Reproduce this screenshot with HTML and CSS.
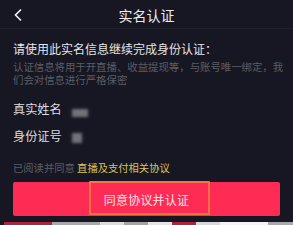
FILE: index.html
```html
<!DOCTYPE html>
<html lang="zh-CN">
<head>
    <meta charset="UTF-8">
    <title>实名认证</title>
    <link rel="stylesheet" href="styles.css">
</head>
<body>
    <div class="header">
        <span class="back">
            <svg width="10" height="14" viewBox="0 0 10 14"><path d="M8 1.5 L2.5 7 L8 12.5" fill="none" stroke="#f2f2f4" stroke-width="1.6"/></svg>
        </span>
        <div class="title">实名认证</div>
    </div>

    <div class="content">
        <div class="headline">请使用此实名信息继续完成身份认证：</div>
        <div class="desc">认证信息将用于开直播、收益提现等，与账号唯一绑定，我们会对信息进行严格保密</div>

        <div class="info">
            <div class="row">
                <span class="label">真实姓名</span>
                <span class="blur name"></span>
            </div>
            <div class="row">
                <span class="label">身份证号</span>
                <span class="blur idno"></span>
            </div>
        </div>

        <div class="agree">已阅读并同意 <a href="#">直播及支付相关协议</a></div>

        <div class="btn-wrap">
            <button class="confirm">同意协议并认证</button>
            <span class="highlight"></span>
        </div>
    </div>

    <div class="strip">
        <span style="width:4px;background:#161722"></span>
        <span style="width:48px;background:#b3213f"></span>
        <span style="width:48px;background:#a9a9ad"></span>
        <span style="width:24px;background:#dcdcdf"></span>
        <span style="width:24px;background:#a4a4a8"></span>
        <span style="width:24px;background:#e4e4e6"></span>
        <span style="width:24px;background:#b3213f"></span>
        <span style="width:24px;background:#d8d8db"></span>
        <span style="width:48px;background:#f4f4f5"></span>
        <span style="width:25px;background:#a9a9ad"></span>
    </div>
</body>
</html>
```

FILE: styles.css
```css
body {
    margin: 0;
    width: 293px;
    height: 225px;
    overflow: hidden;
    background: #161722;
    font-family: "Noto Sans CJK SC", "Noto Sans", sans-serif;
    display: flex;
    flex-direction: column;
}

.header {
    position: relative;
    height: 29px;
    display: flex;
    align-items: center;
    justify-content: center;
    border-bottom: 1px solid rgba(255, 255, 255, 0.05);
    box-sizing: border-box;
}

.header .back {
    position: absolute;
    left: 13px;
    top: 8px;
    display: flex;
}

.header .title {
    color: #ececee;
    font-size: 14px;
    line-height: 20px;
    margin-top: 1px;
}

.content {
    padding: 0 13px;
    display: flex;
    flex-direction: column;
}

.headline {
    margin-top: 12px;
    color: #e6e6e8;
    font-size: 12px;
    line-height: 16px;
}

.desc {
    margin-top: 3px;
    margin-right: -6px;
    color: #5c5d66;
    font-size: 10.4px;
    line-height: 13px;
}

.info {
    margin-top: 9px;
}

.row {
    height: 27px;
    display: flex;
    align-items: center;
}

.label {
    color: #dedee0;
    font-size: 12.2px;
    width: 59px;
}

.blur {
    display: block;
    background: #8a8a90;
    filter: blur(1.5px);
    opacity: 0.8;
}

.blur.name {
    width: 16px;
    height: 8px;
    margin-top: 9px;
}

.blur.idno {
    width: 10px;
    height: 10px;
    margin-top: 4px;
}

.agree {
    margin-top: 12px;
    color: #5c5d66;
    font-size: 10.3px;
    line-height: 14px;
}

.agree a {
    color: #d9c35c;
    text-decoration: none;
}

.btn-wrap {
    position: relative;
    margin-top: 7px;
}

.confirm {
    width: 100%;
    height: 34px;
    border: none;
    border-radius: 2px;
    background: #fe2c55;
    color: #f4e6ea;
    font-family: inherit;
    font-size: 12px;
    letter-spacing: 0.2px;
    padding: 0;
}

.highlight {
    position: absolute;
    left: 76px;
    top: -1px;
    width: 121px;
    height: 34px;
    border: 2px solid #ff7040;
    box-sizing: border-box;
    border-radius: 1px;
}

.strip {
    margin-top: auto;
    height: 3px;
    display: flex;
}

.strip span {
    display: block;
    height: 100%;
}
```
